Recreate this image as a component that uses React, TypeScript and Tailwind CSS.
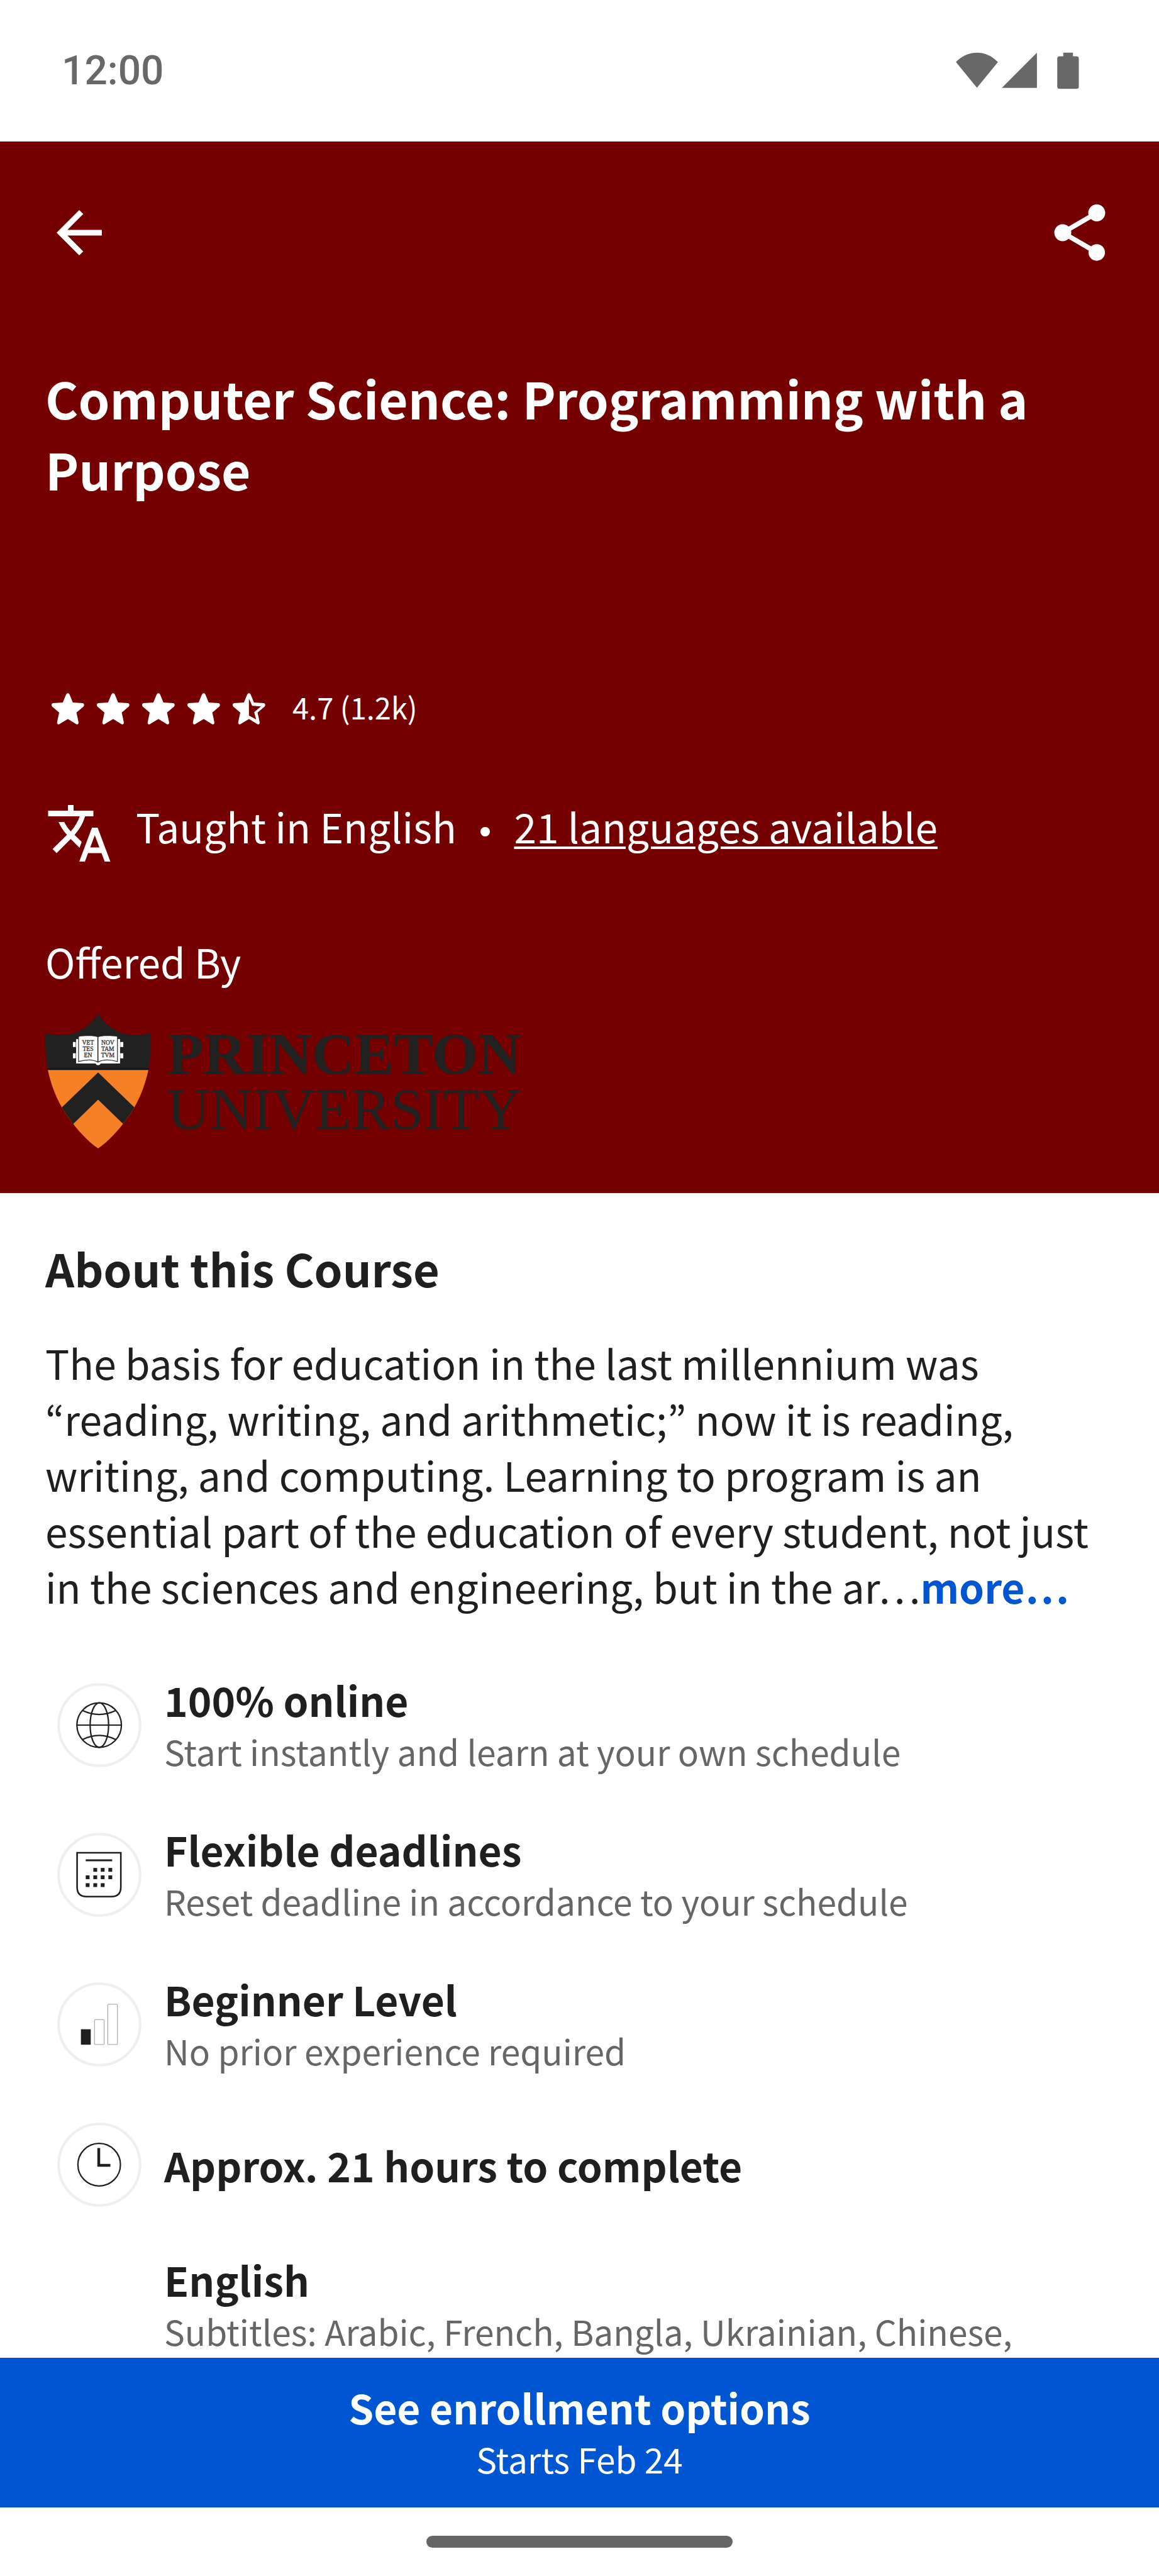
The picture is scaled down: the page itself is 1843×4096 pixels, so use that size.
import type { ReactNode } from "react";

function StatusBar() {
  return (
    <div className="flex h-[225px] shrink-0 items-center justify-between bg-white pr-[127px] pl-[98px] text-[#686868]">
      <time className="font-['Roboto',sans-serif] text-[64px] leading-[80px] font-medium">12:00</time>
      <div className="flex items-center">
        <svg className="h-[59px] w-[67px]" viewBox="72 80 208 184" fill="currentColor" aria-label="Wi-Fi">
          <path d="M72 129C100 99 136 82 176 82s76 17 104 47L176 256z" />
        </svg>
        <svg className="ml-[6px] h-[59px] w-[56px]" viewBox="298 80 174 184" fill="currentColor" aria-label="Signal">
          <path d="M472 82V257H298z" />
        </svg>
        <svg className="ml-[32px] h-[59px] w-[35px]" viewBox="573 80 108 184" fill="currentColor" aria-label="Battery">
          <path d="M603 82h48v18h17q12 0 12 12v138q0 12-12 12h-83q-12 0-12-12V112q0-12 12-12h18z" />
        </svg>
      </div>
    </div>
  );
}

const STAR =
  "M112 35q6 0 9 7L137 81L184 84q9 1 9 9q0 5-4 9L155 131L165 178q2 8-3 11q-4 2-9-1L112 163L71 188q-5 3-9 1q-5-3-3-11L69 131L35 102q-4-4-4-9q0-8 9-9L87 81L103 42q3-7 9-7z";
const STAR_CUTOUT = "M112 62L128 98L172 101L138 130L148 166L112 146z";

function Star({ half = false }: { half?: boolean }) {
  return (
    <svg className="size-[72px]" viewBox="0 0 225 225" fill="currentColor" aria-hidden="true">
      <path fillRule="evenodd" d={half ? STAR + STAR_CUTOUT : STAR} />
    </svg>
  );
}

function Shield() {
  return (
    <svg className="h-[215px] w-[168px] shrink-0" viewBox="46 55 524 671" aria-label="Princeton University shield">
      <defs>
        <clipPath id="shield">
          <path d="M308 55C338 110 396 155 466 162C506 165 541 160 569 153C572 215 568 280 558 335C544 400 521 465 488 522C441 600 376 680 308 726C240 680 175 600 128 522C95 465 72 400 58 335C48 280 44 215 47 153C75 160 110 165 150 162C220 155 278 110 308 55z" />
        </clipPath>
      </defs>
      <g clipPath="url(#shield)">
        <rect x="40" y="50" width="540" height="285" fill="#212121" />
        <rect x="40" y="330" width="540" height="7" fill="#0b1014" />
        <rect x="40" y="337" width="540" height="400" fill="#f58025" />
        <path d="M308 349L508 542L452 624L308 484L165 624L108 542z" fill="#212121" />
      </g>
      <g fill="#fff">
        <rect x="183" y="198" width="14" height="25" />
        <rect x="183" y="254" width="14" height="25" />
        <rect x="418" y="198" width="15" height="25" />
        <rect x="418" y="254" width="15" height="25" />
        <path d="M199 184h218v121h-96q-3 8-13 8t-13-8h-96z" />
      </g>
      <path
        d="M211 176V295C240 287 280 282 307 298C335 282 375 287 404 295V176C370 170 330 168 307 176C285 168 245 170 211 176z"
        fill="#fff"
        stroke="#333"
        strokeWidth="4"
      />
      <path d="M213 171C245 168 285 166 307 174C330 166 370 168 402 171V180H213z" fill="#fff" />
      <path d="M307 174V298" stroke="#222" strokeWidth="5" />
      <g
        className="font-['Liberation_Serif',serif]"
        fill="#333"
        stroke="#333"
        strokeWidth="1"
        fontSize="30"
        textAnchor="middle"
      >
        <text x="258" y="212">VET</text>
        <text x="258" y="242">TES</text>
        <text x="258" y="272">EN</text>
        <text x="356" y="212">NOV</text>
        <text x="356" y="242">TAM</text>
        <text x="356" y="272">TVM</text>
      </g>
    </svg>
  );
}

function Hero() {
  return (
    <header className="flex h-[1672px] flex-col bg-[#750000] px-[72px] pt-[91px] text-white">
      <div className="flex items-center justify-between">
        <button type="button" aria-label="Back">
          <svg className="size-[108px]" viewBox="0 0 24 24" fill="currentColor">
            <path d="M20 11H7.83l5.59-5.59L12 4l-8 8 8 8 1.41-1.41L7.83 13H20v-2z" />
          </svg>
        </button>
        <button type="button" aria-label="Share">
          <svg className="size-[108px]" viewBox="0 0 24 24" fill="currentColor">
            <path d="M18 16.08c-.76 0-1.44.3-1.96.77L8.91 12.7c.05-.23.09-.46.09-.7s-.04-.47-.09-.7l7.05-4.11c.54.5 1.25.81 2.04.81 1.66 0 3-1.34 3-3s-1.34-3-3-3-3 1.34-3 3c0 .24.04.47.09.7L8.04 9.81C7.5 9.31 6.79 9 6 9c-1.66 0-3 1.34-3 3s1.34 3 3 3c.79 0 1.5-.31 2.04-.81l7.12 4.16c-.05.21-.08.43-.08.65 0 1.61 1.31 2.92 2.92 2.92s2.92-1.31 2.92-2.92-1.31-2.92-2.92-2.92z" />
          </svg>
        </button>
      </div>

      <h1 className="mt-[152px] text-[80px] leading-[113px] font-bold">
        Computer Science: Programming with a Purpose
      </h1>

      <div className="mt-[289px] flex items-start">
        <div className="flex" role="img" aria-label="4.7 out of 5 stars">
          <Star />
          <Star />
          <Star />
          <Star />
          <Star half />
        </div>
        <span className="ml-[33px] text-[47px] leading-[66px]">4.7 (1.2k)</span>
      </div>

      <div className="mt-[108px] flex items-start text-[64px] leading-[84px]">
        <svg className="size-[108px] shrink-0" viewBox="0 0 24 24" fill="currentColor" aria-hidden="true">
          <path d="M12.87 15.07l-2.54-2.51.03-.03c1.74-1.94 2.98-4.17 3.71-6.53H17V4h-7V2H8v2H1v1.99h11.17C11.5 7.92 10.44 9.75 9 11.35 8.07 10.32 7.3 9.19 6.69 8h-2c.73 1.63 1.73 3.17 2.98 4.56l-5.09 5.02L4 19l5-5 3.11 3.11.76-2.04zM18.5 10h-2L12 22h2l1.12-3h4.75L21 22h2l-4.5-12zm-2.62 7l1.62-4.33L19.12 17h-3.24z" />
        </svg>
        <p className="ml-[36px]">
          Taught in English
          <span className="mx-[36px] font-['Liberation_Sans',sans-serif] text-[56px] leading-[56px]">•</span>
          <a href="#languages" className="underline decoration-[4px] underline-offset-[5px]">
            21 languages available
          </a>
        </p>
      </div>

      <p className="mt-[105px] text-[64px] leading-[89px]">Offered By</p>
      <div className="mt-[38px] flex items-center text-[#212121]">
        <Shield />
        <div className="ml-[26px] font-['Liberation_Serif',serif] text-[94px] leading-[88px]">
          <div className="font-bold">PRINCETON</div>
          <div>UNIVERSITY</div>
        </div>
      </div>
    </header>
  );
}

function Ring({ children }: { children: ReactNode }) {
  return (
    <svg className="size-[134px] shrink-0" viewBox="104 142 420 420" fill="none" stroke="#1f1f1f" aria-hidden="true">
      <circle cx="314" cy="352" r="203" stroke="#efefef" strokeWidth="13" />
      {children}
    </svg>
  );
}

const DOTS: [number, number][] = [
  [284, 318],
  [321, 318],
  [359, 318],
  [246, 355],
  [284, 355],
  [321, 355],
  [359, 355],
  [246, 394],
  [284, 394],
  [321, 394],
];

function GlobeIcon() {
  return (
    <Ring>
      <g strokeWidth="7">
        <circle cx="313" cy="352" r="111" />
        <ellipse cx="314" cy="352" rx="46" ry="111" />
        <path d="M202 352H425M230 279Q313 319 396 279M230 424Q313 382 396 424" />
      </g>
    </Ring>
  );
}

function CalendarIcon() {
  return (
    <Ring>
      <path d="M203 242H421V413Q421 461 373 461H251Q203 461 203 413z" strokeWidth="8" />
      <path d="M246 280H378" strokeWidth="9" />
      {DOTS.map(([x, y]) => (
        <rect key={`${x}-${y}`} x={x} y={y} width="19" height="19" fill="#1f1f1f" stroke="none" />
      ))}
    </Ring>
  );
}

function LevelIcon() {
  return (
    <Ring>
      <rect x="222" y="376" width="49" height="77" fill="#1f1f1f" stroke="none" />
      <rect x="290" y="328" width="48" height="124" rx="4" stroke="#b4afaf" strokeWidth="4" />
      <rect x="356" y="251" width="48" height="201" rx="4" stroke="#b4afaf" strokeWidth="4" />
    </Ring>
  );
}

function ClockIcon() {
  return (
    <Ring>
      <circle cx="313" cy="352" r="106" strokeWidth="7" />
      <path d="M311 269V355H369" strokeWidth="14" />
    </Ring>
  );
}

const FACTS: { title: string; detail?: string; icon?: ReactNode }[] = [
  { title: "100% online", detail: "Start instantly and learn at your own schedule", icon: <GlobeIcon /> },
  { title: "Flexible deadlines", detail: "Reset deadline in accordance to your schedule", icon: <CalendarIcon /> },
  { title: "Beginner Level", detail: "No prior experience required", icon: <LevelIcon /> },
  { title: "Approx. 21 hours to complete", icon: <ClockIcon /> },
  { title: "English", detail: "Subtitles: Arabic, French, Bangla, Ukrainian, Chinese," },
];

function About() {
  return (
    <section className="px-[72px] pt-[71px]">
      <h2 className="text-[72px] leading-[96px] font-bold">About this Course</h2>
      <p className="mt-[58px] text-[64px] leading-[89px]">
        The basis for education in the last millennium was “reading, writing, and arithmetic;” now it is reading,
        writing, and computing. Learning to program is an essential part of the education of every student, not just in
        the sciences and engineering, but in the ar…
        <a href="#more" className="font-bold text-[#0056d2]">
          more…
        </a>
      </p>
      <ul className="mt-[94px] flex flex-col gap-[74px] pl-[19px]">
        {FACTS.map((fact) => (
          <li key={fact.title} className="flex items-center gap-[36px]">
            {fact.icon ?? <span className="w-[134px] shrink-0" />}
            <div>
              <h3 className="text-[64px] leading-[82px] font-bold">{fact.title}</h3>
              {fact.detail && <p className="text-[55px] leading-[82px] text-[#666666]">{fact.detail}</p>}
            </div>
          </li>
        ))}
      </ul>
    </section>
  );
}

export default function App() {
  return (
    <div
      lang="en"
      className="flex h-screen flex-col overflow-hidden bg-white font-['Noto_Sans_CJK_KR',sans-serif] text-[#1f1f1f]"
    >
      <StatusBar />
      <main className="min-h-0 flex-1 overflow-hidden">
        <Hero />
        <About />
      </main>
      <button
        type="button"
        className="flex h-[238px] shrink-0 flex-col items-center justify-center bg-[#0056d2] text-white"
      >
        <span className="text-[64px] leading-[82px] font-bold">See enrollment options</span>
        <span className="text-[55px] leading-[82px]">Starts Feb 24</span>
      </button>
      <div className="flex h-[109px] shrink-0 items-center justify-center bg-white">
        <div className="h-[19px] w-[487px] rounded-full bg-[#666666]" />
      </div>
    </div>
  );
}
